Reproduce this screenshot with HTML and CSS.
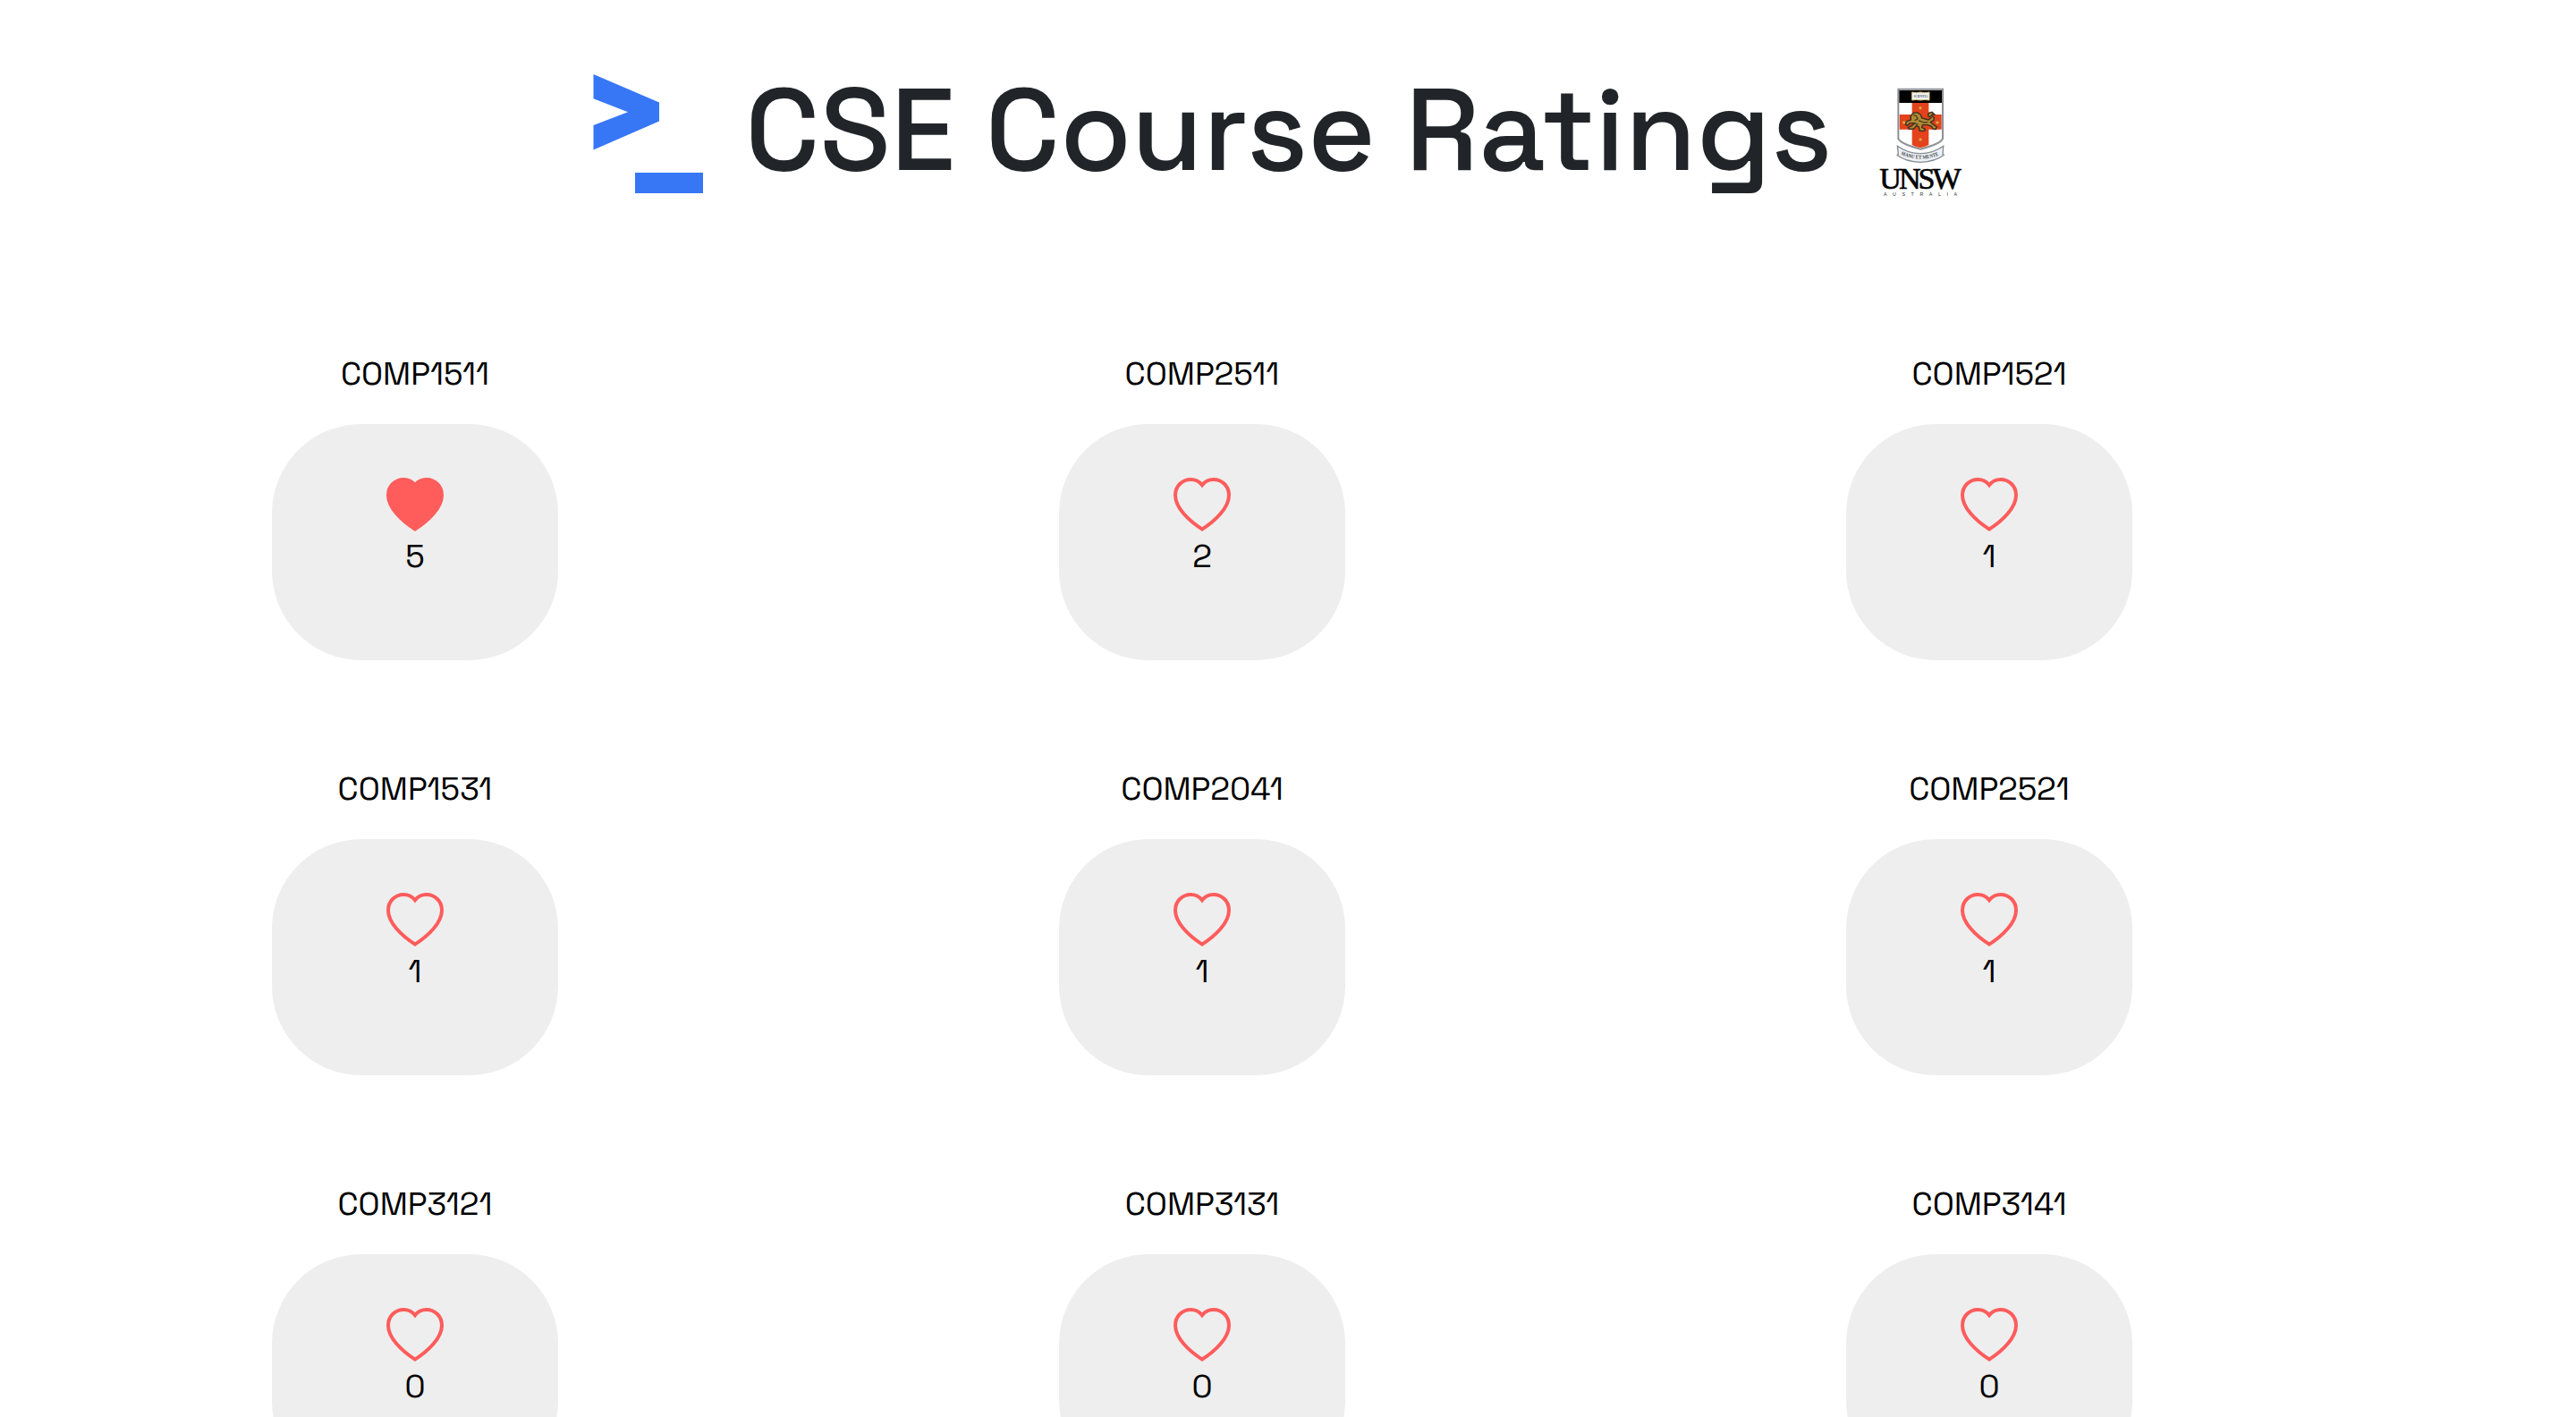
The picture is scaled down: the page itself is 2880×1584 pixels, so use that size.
FILE: index.html
```html
<!DOCTYPE html>
<html lang="en">
<head>
<meta charset="utf-8">
<title>CSE Course Ratings</title>
<link rel="stylesheet" href="styles.css">
</head>
<body>
<svg width="0" height="0" class="defs">
  <symbol id="heart" viewBox="0 0 32 30"><path d="M16 4.1C14.3 2 12.1 1 9.7 1 4.8 1 1 4.8 1 9.7 1 16.8 8.6 24.1 16 28.8 23.4 24.1 31 16.8 31 9.7 31 4.8 27.2 1 22.3 1 19.9 1 17.7 2 16 4.1Z" stroke="#ff5c5c" stroke-width="2"/></symbol>
</svg>
<header class="header">
  <svg class="prompt" viewBox="0 0 124 134" fill="#3777f6"><path d="M.5 0 74 31.5v21L.5 84.500V57L39 42.200.5 27.300Z"/><path d="M47 110h76v23H47z"/></svg>
  <h1 class="title">CSE Course Ratings</h1>
  <svg class="crest" viewBox="0 0 360 420">
    <path d="M97 29h149v166q-8 18-74.500 35Q106 213 97 195Z" fill="#fff" stroke="#8d9095" stroke-width="6"/>
    <path d="M100 33h143v42H100z" fill="#000"/>
    <path d="M143 75h56v141q-12 7-28 10-16-3-28-10zM101 114h141v50H101z" fill="#e3421c"/>
    <path d="M143 39q14 4 28 0 14 4 30 0v27q-14-3-30 0-14-3-28 0z" fill="#eef3f8" stroke="#d8c278" stroke-width="3"/>
    <text x="149" y="57" font-size="12" font-weight="700" textLength="46" lengthAdjust="spacingAndGlyphs" fill="#555">SCIENTIA</text>
    <g fill="#f0a13a" stroke="#b9541c" stroke-width="2"><circle cx="171" cy="92" r="6"/><circle cx="116" cy="141" r="6"/><circle cx="228" cy="141" r="6"/><circle cx="171" cy="198" r="6"/></g>
    <path d="M139 119l8-10 14-2 11 8 4 11 22 6 9-7-10-6 2-10 11-3 9 8-8 0-4 4 10 6-1 9-11 7 12 9 9 7-4 8-10-3-3-7-13-5-18 0-2 8 11 6-2 6-16 0-3-13-8-5-9 11-16 1-3-6 13-5 8-9-15 0-8 8-7-3 4-11 14-5z" fill="#b08b35" stroke="#38301f" stroke-width="4"/>
    <path d="M147 115l11 4 4 10-10 5M165 134l18 7 13-1M151 143l12 5" fill="none" stroke="#4b4023" stroke-width="4"/>
    <path d="M94 220q34 25 77 25t77-25l-2 27 4 3q-30 23-79 24-49-1-78-24l4-4z" fill="#edf2f7" stroke="#858b91" stroke-width="4"/>
    <path id="motto" d="M105 248q66 30 134 0" fill="none"/>
    <text font-size="18" font-weight="700" fill="#444"><textPath href="#motto" textLength="132" lengthAdjust="spacingAndGlyphs">MANU ET MENTE</textPath></text>
    <text x="34" y="364" font-size="102" letter-spacing="-9" textLength="265" lengthAdjust="spacingAndGlyphs" stroke="#000" stroke-width="2">UNSW</text>
    <text class="sub" x="48" y="388" font-size="16" textLength="246" fill="#333">AUSTRALIA</text>
  </svg>
</header>
<main class="grid">
  <section class="course"><h2 class="code">COMP1511</h2><div class="card"><svg class="heart liked"><use href="#heart"/></svg><span class="count">5</span></div></section>
  <section class="course"><h2 class="code">COMP2511</h2><div class="card"><svg class="heart"><use href="#heart"/></svg><span class="count">2</span></div></section>
  <section class="course"><h2 class="code">COMP1521</h2><div class="card"><svg class="heart"><use href="#heart"/></svg><span class="count">1</span></div></section>
  <section class="course"><h2 class="code">COMP1531</h2><div class="card"><svg class="heart"><use href="#heart"/></svg><span class="count">1</span></div></section>
  <section class="course"><h2 class="code">COMP2041</h2><div class="card"><svg class="heart"><use href="#heart"/></svg><span class="count">1</span></div></section>
  <section class="course"><h2 class="code">COMP2521</h2><div class="card"><svg class="heart"><use href="#heart"/></svg><span class="count">1</span></div></section>
  <section class="course"><h2 class="code">COMP3121</h2><div class="card"><svg class="heart"><use href="#heart"/></svg><span class="count">0</span></div></section>
  <section class="course"><h2 class="code">COMP3131</h2><div class="card"><svg class="heart"><use href="#heart"/></svg><span class="count">0</span></div></section>
  <section class="course"><h2 class="code">COMP3141</h2><div class="card"><svg class="heart"><use href="#heart"/></svg><span class="count">0</span></div></section>
</main>
</body>
</html>
```
FILE: styles.css
```css
* { box-sizing: border-box; margin: 0; }
body { background: #fff; color: #000; font-family: "Space Grotesk", Roboto, sans-serif; }
.defs { display: block; }
.header { display: flex; align-items: flex-start; height: 394px; padding: 83px 0 0 663px; }
.prompt { width: 124px; height: 134px; flex: none; }
.title { flex: none; width: 1257px; height: 140px; margin: -16px 0 0 46px; font-size: 130px; line-height: 156px; font-weight: 500; color: #212529; white-space: nowrap; }
.crest { width: 120px; height: 140px; flex: none; margin-top: 7px; font-family: "Liberation Serif", serif; }
.crest .sub { font-family: "Liberation Sans", sans-serif; }
.grid { display: grid; grid-template-columns: repeat(3, 880px); grid-auto-rows: 464px; height: 1190px; padding-left: 24px; overflow: hidden; }
.course { display: flex; flex-direction: column; align-items: center; }
.code { height: 80px; font-size: 36px; line-height: 48px; font-weight: 400; }
.card { display: flex; flex-direction: column; align-items: center; width: 320px; height: 264px; padding-top: 60px; border-radius: 100px; background: #eee; }
.heart { width: 64px; height: 60px; fill: none; }
.liked { fill: #ff5c5c; }
.count { margin-top: 5px; font-size: 36px; line-height: 46px; }
```
